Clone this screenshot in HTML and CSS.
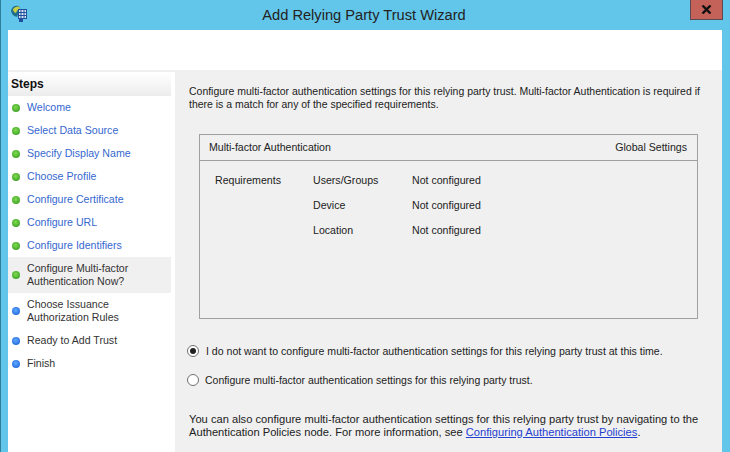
FILE: index.html
```html
<!DOCTYPE html>
<html>

<head>
    <title>Add Relying Party Trust Wizard</title>
    <link rel="stylesheet" href="styles.css">
</head>

<body>
    <div class="window">
        <div class="titlebar">
            <svg class="app-icon" width="20" height="20" viewBox="0 0 20 20">
                <path d="M1 7 Q2 1 9 2 L10 5 L7 13 Q2 12 1 7Z" fill="#1f6f8c" />
                <path d="M3 5 Q5 2 9 2.5 L10 5 Q7 5.5 6 9 Q3 8 3 5Z" fill="#c9cf45" />
                <rect x="8.5" y="5.5" width="8" height="9" fill="#d6e6f4" stroke="#1f4f9c" />
                <path d="M11 6 V14 M14 6 V14 M9 8.5 H16 M9 11.5 H16" stroke="#1f4f9c" stroke-width="1" />
                <rect x="9" y="15" width="4" height="3" fill="#1f4f9c" />
            </svg>
            <div class="title">Add Relying Party Trust Wizard</div>
            <div class="close">
                <svg width="11" height="9" viewBox="0 0 11 9">
                    <path d="M1.5 0.5 L9.5 8.5 M9.5 0.5 L1.5 8.5" stroke="#111" stroke-width="2.4" fill="none" />
                </svg>
            </div>
        </div>

        <div class="banner"></div>

        <div class="main">
            <div class="steps">
                <div class="steps-head">Steps</div>
                <div class="step done"><span class="dot green"></span><a>Welcome</a></div>
                <div class="step done"><span class="dot green"></span><a>Select Data Source</a></div>
                <div class="step done"><span class="dot green"></span><a>Specify Display Name</a></div>
                <div class="step done"><span class="dot green"></span><a>Choose Profile</a></div>
                <div class="step done"><span class="dot green"></span><a>Configure Certificate</a></div>
                <div class="step done"><span class="dot green"></span><a>Configure URL</a></div>
                <div class="step done"><span class="dot green"></span><a>Configure Identifiers</a></div>
                <div class="step two current"><span class="dot green"></span><a>Configure Multi-factor<br>Authentication Now?</a></div>
                <div class="step two"><span class="dot blue"></span><a>Choose Issuance<br>Authorization Rules</a></div>
                <div class="step"><span class="dot blue"></span><a>Ready to Add Trust</a></div>
                <div class="step"><span class="dot blue"></span><a>Finish</a></div>
            </div>

            <div class="content">
                <p class="intro">Configure multi-factor authentication settings for this relying party trust. Multi-factor Authentication is required if<br>there is a match for any of the specified requirements.</p>

                <div class="mfa-box">
                    <div class="mfa-head">
                        <span>Multi-factor Authentication</span>
                        <span>Global Settings</span>
                    </div>
                    <div class="mfa-grid">
                        <span>Requirements</span><span>Users/Groups</span><span>Not configured</span>
                        <span></span><span>Device</span><span>Not configured</span>
                        <span></span><span>Location</span><span>Not configured</span>
                    </div>
                </div>

                <div class="options">
                    <div class="option first"><span class="radio checked"></span><span>I do not want to configure multi-factor authentication settings for this relying party trust at this time.</span></div>
                    <div class="option second"><span class="radio"></span><span>Configure multi-factor authentication settings for this relying party trust.</span></div>
                </div>

                <p class="note">You can also configure multi-factor authentication settings for this relying party trust by navigating to the<br>Authentication Policies node. For more information, see <a href="#">Configuring Authentication Policies</a>.</p>
            </div>
        </div>
    </div>
</body>

</html>
```

FILE: styles.css
```css
html,
body {
    margin: 0;
    padding: 0;
    height: 100%;
    overflow: hidden;
}

body {
    font-family: "Liberation Sans", Arial, sans-serif;
    font-size: 10.6px;
    line-height: 13px;
    color: #222;
}

.window {
    height: 452px;
    background: #62c6ea;
    padding: 0 8px 0 7px;
    border-left: 1px solid #2e7f9c;
    box-sizing: border-box;
    display: flex;
    flex-direction: column;
}

.titlebar {
    height: 30px;
    flex: none;
    display: flex;
    margin-right: -1px;
}

.app-icon {
    margin: 4px 0 0 2px;
    flex: none;
}

.title {
    flex: 1;
    text-align: center;
    font-size: 14.65px;
    line-height: 30px;
    color: #222;
    padding-left: 8px;
}

.close {
    width: 33px;
    height: 20px;
    background: #c4625a;
    border: 1px solid #5d4a50;
    border-top: none;
    box-sizing: border-box;
    display: flex;
    align-items: center;
    justify-content: center;
}

.banner {
    height: 40px;
    flex: none;
    background: #fff;
    border-bottom: 2px solid #f0f0f0;
}

.main {
    flex: 1;
    display: flex;
    background: #fff;
    min-height: 0;
}

.steps {
    width: 166px;
    flex: none;
    padding-top: 1px;
}

.steps-head {
    height: 23px;
    line-height: 22px;
    font-weight: bold;
    font-size: 12px;
    color: #111;
    padding-left: 3px;
    margin-right: 3px;
    background: linear-gradient(#fff, #ececec);
}

.step {
    height: 23px;
    display: flex;
    align-items: center;
    margin-right: 3px;
    padding-left: 4px;
}

.step.two {
    height: 36px;
}

.step.current {
    background: #f0f0f0;
}

.step a {
    color: #333;
    margin-left: 7px;
}

.step.done a {
    color: #3568d0;
}

.step.current a {
    color: #333;
}

.dot {
    width: 8px;
    height: 8px;
    border-radius: 50%;
    flex: none;
}

.dot.green {
    background: radial-gradient(circle at 45% 40%, #7fdc50, #45a82a 70%, #2f8a20);
}

.dot.blue {
    background: radial-gradient(circle at 45% 40%, #5fa8ff, #2a70e0 70%, #1b52b0);
}

.content {
    flex: 1;
    background: #f0f0f0;
    padding: 13px 14px 0 14px;
    margin-left: 1px;
}

.intro {
    margin: 0;
    font-size: 10.48px;
}

.mfa-box {
    height: 185px;
    margin: 23px 10px 0 10px;
    border: 1px solid #a0a0a0;
    box-sizing: border-box;
}

.mfa-head {
    height: 25px;
    display: flex;
    justify-content: space-between;
    align-items: center;
    padding: 0 10px 0 9px;
    border-bottom: 1px solid #a0a0a0;
}

.mfa-grid {
    display: grid;
    grid-template-columns: 98px 99px 1fr;
    grid-auto-rows: 25px;
    align-items: center;
    padding: 7px 0 0 15px;
}

.options {
    margin-top: 25px;
    display: flex;
    flex-direction: column;
    gap: 15px;
    margin-left: -2px;
    font-size: 10.48px;
}

.option {
    height: 14px;
    display: flex;
    align-items: center;
    gap: 7px;
}

.option.first {
    font-size: 10.56px;
}

.option.second {
    gap: 6px;
}

.radio {
    width: 12px;
    height: 12px;
    border: 1px solid #707070;
    border-radius: 50%;
    background: #fff;
    box-sizing: border-box;
    display: flex;
    align-items: center;
    justify-content: center;
    flex: none;
}

.radio.checked::after {
    content: "";
    width: 6px;
    height: 6px;
    border-radius: 50%;
    background: #222;
}

.note {
    margin: 26px 0 0 0;
    font-size: 11.15px;
}

.note a {
    color: #2440d0;
}
```
